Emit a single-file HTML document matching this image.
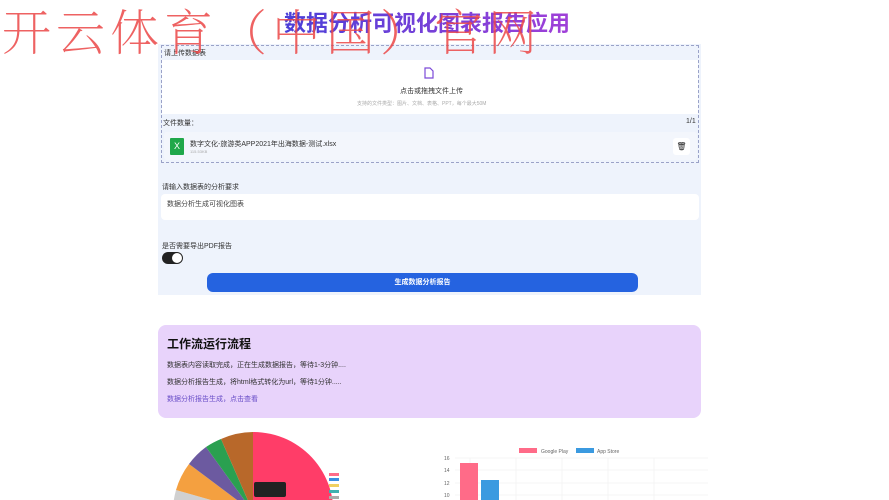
<!DOCTYPE html>
<html><head><meta charset="utf-8"><style>
*{margin:0;padding:0;box-sizing:border-box}
html,body{width:889px;height:500px;overflow:hidden}
body{background:#fff;font-family:"Liberation Sans","Noto Sans CJK SC",sans-serif;position:relative;color:#222}
.abs{position:absolute}
.wm{left:2px;top:-5px;font-size:49px;color:rgba(235,70,70,.85);font-family:"Noto Serif CJK SC","Noto Sans CJK SC",serif;font-weight:200;letter-spacing:5px;white-space:nowrap;z-index:5}
.title{left:284px;top:6px;font-size:22px;font-weight:bold;background:linear-gradient(90deg,#4a3fd8,#a040d8);-webkit-background-clip:text;color:transparent;white-space:nowrap}
.panel{left:158px;top:44px;width:543px;height:251px;background:#eef3fc}
.up{left:161px;top:45px;width:538px;height:118px;border:1px dashed #9aa2c8}
.s{font-size:7px;color:#333}
</style></head><body>
<div class="abs wm">开云体育（中国）官网</div>
<div class="abs title">数据分析可视化图表报告应用</div>
<div class="abs panel"></div>
<div class="abs up"></div>
<div class="abs s" style="left:164px;top:48px">请上传数据表</div>
<div class="abs" style="left:162px;top:60px;width:536px;height:54px;background:#fff"></div>
<svg class="abs" style="left:424px;top:67px" width="10" height="12" viewBox="0 0 10 12"><path d="M1 1h5l3 3v7H1z" fill="none" stroke="#7c4ad8" stroke-width="1.2"/></svg>
<div class="abs s" style="left:400px;top:86px">点击或拖拽文件上传</div>
<div class="abs" style="left:357px;top:100px;font-size:5px;color:#aaa">支持的文件类型：图片、文档、表格、PPT，每个最大50M</div>
<div class="abs s" style="left:163px;top:118px">文件数量：</div>
<div class="abs s" style="left:686px;top:118px">1/1</div>
<div class="abs" style="left:164px;top:132px;width:533px;height:28px;background:#f3f6fc;border-radius:3px"></div>
<div class="abs" style="left:170px;top:138px;width:14px;height:17px;background:#20a84a;color:#fff;font-size:9px;text-align:center;line-height:17px;border-radius:1px">X</div>
<div class="abs s" style="left:190px;top:139px">数字文化-旅游类APP2021年出海数据-测试.xlsx</div>
<div class="abs" style="left:190px;top:149px;font-size:4px;color:#aaa">115.53KB</div>
<div class="abs" style="left:673px;top:138px;width:17px;height:17px;background:#fff;border-radius:3px;font-size:8px;text-align:center;line-height:17px">🗑</div>
<div class="abs s" style="left:162px;top:182px">请输入数据表的分析要求</div>
<div class="abs" style="left:161px;top:194px;width:538px;height:26px;background:#fff;border-radius:4px"></div>
<div class="abs s" style="left:167px;top:199px;color:#444">数据分析生成可视化图表</div>
<div class="abs s" style="left:162px;top:241px">是否需要导出PDF报告</div>
<div class="abs" style="left:162px;top:252px;width:21px;height:12px;background:#222;border-radius:6px"></div>
<div class="abs" style="left:172px;top:253px;width:10px;height:10px;background:#fff;border-radius:5px"></div>
<div class="abs" style="left:207px;top:273px;width:431px;height:19px;background:#2563e0;border-radius:6px;color:#fff;font-size:7px;text-align:center;line-height:19px;font-weight:bold">生成数据分析报告</div>
<div class="abs" style="left:158px;top:325px;width:543px;height:93px;background:#e8d3fb;border-radius:8px"></div>
<div class="abs" style="left:167px;top:335px;font-size:12px;font-weight:bold;color:#111">工作流运行流程</div>
<div class="abs s" style="left:167px;top:360px">数据表内容读取完成，正在生成数据报告，等待1-3分钟....</div>
<div class="abs s" style="left:167px;top:377px">数据分析报告生成，将html格式转化为url，等待1分钟.....</div>
<div class="abs s" style="left:167px;top:394px;color:#6a4fc8">数据分析报告生成，点击查看</div>
<svg class="abs" style="left:0;top:0" width="889" height="500">
<g transform="translate(253,512)">
<path d="M0 0V-80A80 80 0 1 1 -30 74Z" fill="#ff3d68"/>
<path d="M0 0L-30 74A80 80 0 0 1 -68 42Z" fill="#d8b8f0"/>
<path d="M0 0L-68 42A80 80 0 0 1 -77 -22Z" fill="#d0d0d0"/>
<path d="M0 0L-77 -22A80 80 0 0 1 -64 -48Z" fill="#f4a040"/>
<path d="M0 0L-64 -48A80 80 0 0 1 -47 -65Z" fill="#6c5aa0"/>
<path d="M0 0L-47 -65A80 80 0 0 1 -32 -73Z" fill="#2aa050"/>
<path d="M0 0L-32 -73A80 80 0 0 1 0 -80Z" fill="#b8682a"/>
</g>
<rect x="254" y="482" width="32" height="15" fill="#222" rx="2"/>
<rect x="329" y="473" width="10" height="3" fill="#ff6b88"/>
<rect x="329" y="478" width="10" height="3" fill="#3b8ee0"/>
<rect x="329" y="484" width="10" height="3" fill="#f0d060"/>
<rect x="329" y="490" width="10" height="3" fill="#40b0b0"/>
<rect x="329" y="496" width="10" height="3" fill="#aaa"/>
<rect x="519" y="448" width="18" height="5" fill="#ff6b88"/>
<text x="541" y="453" font-size="5" fill="#666">Google Play</text>
<rect x="576" y="448" width="18" height="5" fill="#3b9ae0"/>
<text x="597" y="453" font-size="5" fill="#666">App Store</text>
<g stroke="#eee" stroke-width=".6">
<line x1="455" y1="458" x2="708" y2="458"/><line x1="455" y1="470" x2="708" y2="470"/><line x1="455" y1="483" x2="708" y2="483"/><line x1="455" y1="495" x2="708" y2="495"/>
<line x1="470" y1="458" x2="470" y2="500"/><line x1="516" y1="458" x2="516" y2="500"/><line x1="562" y1="458" x2="562" y2="500"/><line x1="608" y1="458" x2="608" y2="500"/><line x1="654" y1="458" x2="654" y2="500"/></g>
<g font-size="5" fill="#666"><text x="444" y="460">16</text><text x="444" y="472">14</text><text x="444" y="485">12</text><text x="444" y="497">10</text></g>
<rect x="460" y="463" width="18" height="37" fill="#ff6b88"/>
<rect x="481" y="480" width="18" height="20" fill="#3b9ae0"/>
</svg>
</body></html>
